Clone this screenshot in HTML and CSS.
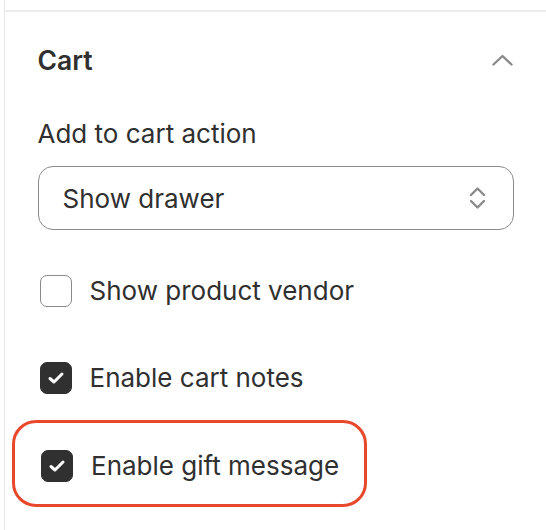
FILE: index.html
```html
<!DOCTYPE html>
<html>
<head>
<meta charset="utf-8">
<link rel="stylesheet" href="styles.css">
</head>
<body>
<div class="panel">
  <div class="section">
    <div class="header">
      <h2 class="title">Cart</h2>
      <svg class="chevron" width="21" height="12" viewBox="0 0 21 12"><path d="M1.5 10.5 L10.5 2 L19.5 10.5" fill="none" stroke="#8a8a8a" stroke-width="2.4" stroke-linecap="round" stroke-linejoin="round"/></svg>
    </div>
    <div class="field">
      <label class="label">Add to cart action</label>
      <div class="select">
        <span>Show drawer</span>
        <svg class="updown" width="17" height="24" viewBox="0 0 17 24"><path d="M2 9 L8.5 2.5 L15 9 M2 15 L8.5 21.5 L15 15" fill="none" stroke="#8a8a8a" stroke-width="2.4" stroke-linecap="round" stroke-linejoin="round"/></svg>
      </div>
    </div>
    <div class="check-row first">
      <span class="box"></span>
      <span class="check-label">Show product vendor</span>
    </div>
    <div class="check-row second">
      <span class="box checked"><svg width="18" height="14" viewBox="0 0 18 14"><path d="M3 7.5 L7 11 L15 3" fill="none" stroke="#fff" stroke-width="3" stroke-linecap="round" stroke-linejoin="round"/></svg></span>
      <span class="check-label">Enable cart notes</span>
    </div>
    <div class="highlight">
      <div class="check-row inner">
        <span class="box checked"><svg width="18" height="14" viewBox="0 0 18 14"><path d="M3 7.5 L7 11 L15 3" fill="none" stroke="#fff" stroke-width="3" stroke-linecap="round" stroke-linejoin="round"/></svg></span>
        <span class="check-label">Enable gift message</span>
      </div>
    </div>
  </div>
</div>
</body>
</html>
```

FILE: styles.css
```css
html, body {
  margin: 0;
  padding: 0;
  background: #fff;
}
body {
  font-family: Inter, "Noto Sans", sans-serif;
  color: #303030;
  width: 546px;
  height: 530px;
  overflow: hidden;
}
.panel {
  margin-left: 4px;
  border-left: 1.5px solid #e6e6e6;
  height: 530px;
  box-sizing: border-box;
  padding-top: 10px;
}
.section {
  border-top: 2px solid #ebebeb;
  padding: 0 32px 0 32.5px;
}
.header {
  display: flex;
  align-items: center;
  justify-content: space-between;
  height: 96px;
}
.title {
  margin: 0;
  font-size: 26.5px;
  font-weight: 600;
  line-height: 32px;
}
.chevron {
  margin-right: 1px;
}
.field {
  display: flex;
  flex-direction: column;
  margin-top: 10px;
}
.label {
  font-size: 26px;
  font-weight: 400;
  line-height: 32px;
  margin-bottom: 16px;
}
.select {
  display: flex;
  align-items: center;
  justify-content: space-between;
  height: 64px;
  box-sizing: border-box;
  border: 1px solid #8a8a8a;
  border-radius: 15px;
  padding: 0 27px 0 24px;
  font-size: 26px;
  font-weight: 400;
}
.check-row {
  display: flex;
  align-items: center;
  gap: 18px;
  font-size: 26px;
  font-weight: 400;
  line-height: 32px;
  padding-left: 2px;
}
.check-row.first {
  margin-top: 45px;
}
.check-row.second {
  margin-top: 55px;
}
.box {
  width: 32px;
  height: 32px;
  box-sizing: border-box;
  border: 1.5px solid #8a8a8a;
  border-radius: 7px;
  display: flex;
  align-items: center;
  justify-content: center;
  flex: none;
}
.box.checked {
  background: #303030;
  border-color: #303030;
}
.highlight {
  margin-left: -25.5px;
  width: 355px;
  height: 87px;
  margin-top: 26px;
  box-sizing: border-box;
  border: 3.5px solid #e8482b;
  border-radius: 24px;
  display: flex;
  align-items: center;
  padding-left: 24px;
  padding-top: 4px;
}
.check-row.inner {
  margin-top: 0;
}
```
